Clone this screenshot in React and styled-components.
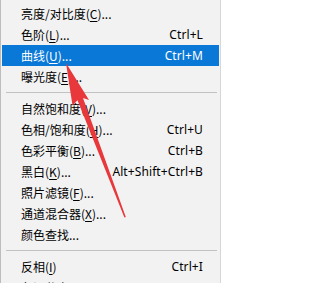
import React from 'react';
import styled, { createGlobalStyle } from 'styled-components';

const GlobalStyle = createGlobalStyle`
  html, body {
    margin: 0;
    padding: 0;
    background: #ffffff;
    overflow: hidden;
  }
`;

const Page = styled.div`
  position: relative;
  width: 223px;
  height: 283px;
  overflow: hidden;
`;

const Menu = styled.ul`
  list-style: none;
  margin: 0;
  width: 217px;
  padding: 3px 1px 0 1px;
  background: #f2f2f2;
  border-left: 1px solid #bdbdbd;
  border-right: 1px solid #d6d6d6;
  font-family: "Noto Sans CJK SC", "Noto Sans", sans-serif;
  font-size: 12px;
  color: #000000;
`;

const Item = styled.li`
  display: flex;
  align-items: center;
  justify-content: space-between;
  height: 21px;
  padding: 0 16px 0 19px;
  background: ${(p) => (p.$active ? '#0a78d7' : 'transparent')};
  color: ${(p) => (p.$active ? '#ffffff' : '#000000')};
  white-space: nowrap;

  u {
    text-decoration-thickness: 1px;
    text-underline-offset: 2px;
  }
`;

const Label = styled.span`
  line-height: 21px;
`;

const Shortcut = styled.span`
  font-family: "Noto Sans", sans-serif;
  font-size: 12px;
  letter-spacing: 0.1px;
`;

const Separator = styled.li`
  height: 11px;
  display: flex;
  align-items: center;
  padding: 0 2px 0 4px;

  &::after {
    content: '';
    flex: 1;
    height: 1px;
    background: #c2c2c2;
  }
`;

const Overlay = styled.svg`
  position: absolute;
  left: 0;
  top: 0;
  pointer-events: none;
`;

const items = [
  { label: '亮度/对比度(', key: 'C', tail: ')...' },
  { label: '色阶(', key: 'L', tail: ')...', shortcut: 'Ctrl+L' },
  { label: '曲线(', key: 'U', tail: ')...', shortcut: 'Ctrl+M', active: true },
  { label: '曝光度(', key: 'E', tail: ')...' },
  { sep: true },
  { label: '自然饱和度(', key: 'V', tail: ')...' },
  { label: '色相/饱和度(', key: 'H', tail: ')...', shortcut: 'Ctrl+U' },
  { label: '色彩平衡(', key: 'B', tail: ')...', shortcut: 'Ctrl+B' },
  { label: '黑白(', key: 'K', tail: ')...', shortcut: 'Alt+Shift+Ctrl+B' },
  { label: '照片滤镜(', key: 'F', tail: ')...' },
  { label: '通道混合器(', key: 'X', tail: ')...' },
  { label: '颜色查找...' },
  { sep: true },
  { label: '反相(', key: 'I', tail: ')', shortcut: 'Ctrl+I' },
  { label: '色调分离(', key: 'P', tail: ')...' },
];

const Arrow = () => (
  <Overlay width="223" height="283" viewBox="0 0 223 283">
    <polygon
      fill="#e8383b"
      points="66,63 89,100 83,98 125.8,217 124.4,217.4 77.5,100.2 72.5,105.5"
    />
  </Overlay>
);

export default function App() {
  return (
    <Page>
      <GlobalStyle />
      <Menu>
        {items.map((it, i) =>
          it.sep ? (
            <Separator key={i} />
          ) : (
            <Item key={i} $active={it.active}>
              <Label>
                {it.label}
                {it.key && <u>{it.key}</u>}
                {it.tail}
              </Label>
              {it.shortcut && <Shortcut>{it.shortcut}</Shortcut>}
            </Item>
          )
        )}
      </Menu>
      <Arrow />
    </Page>
  );
}
